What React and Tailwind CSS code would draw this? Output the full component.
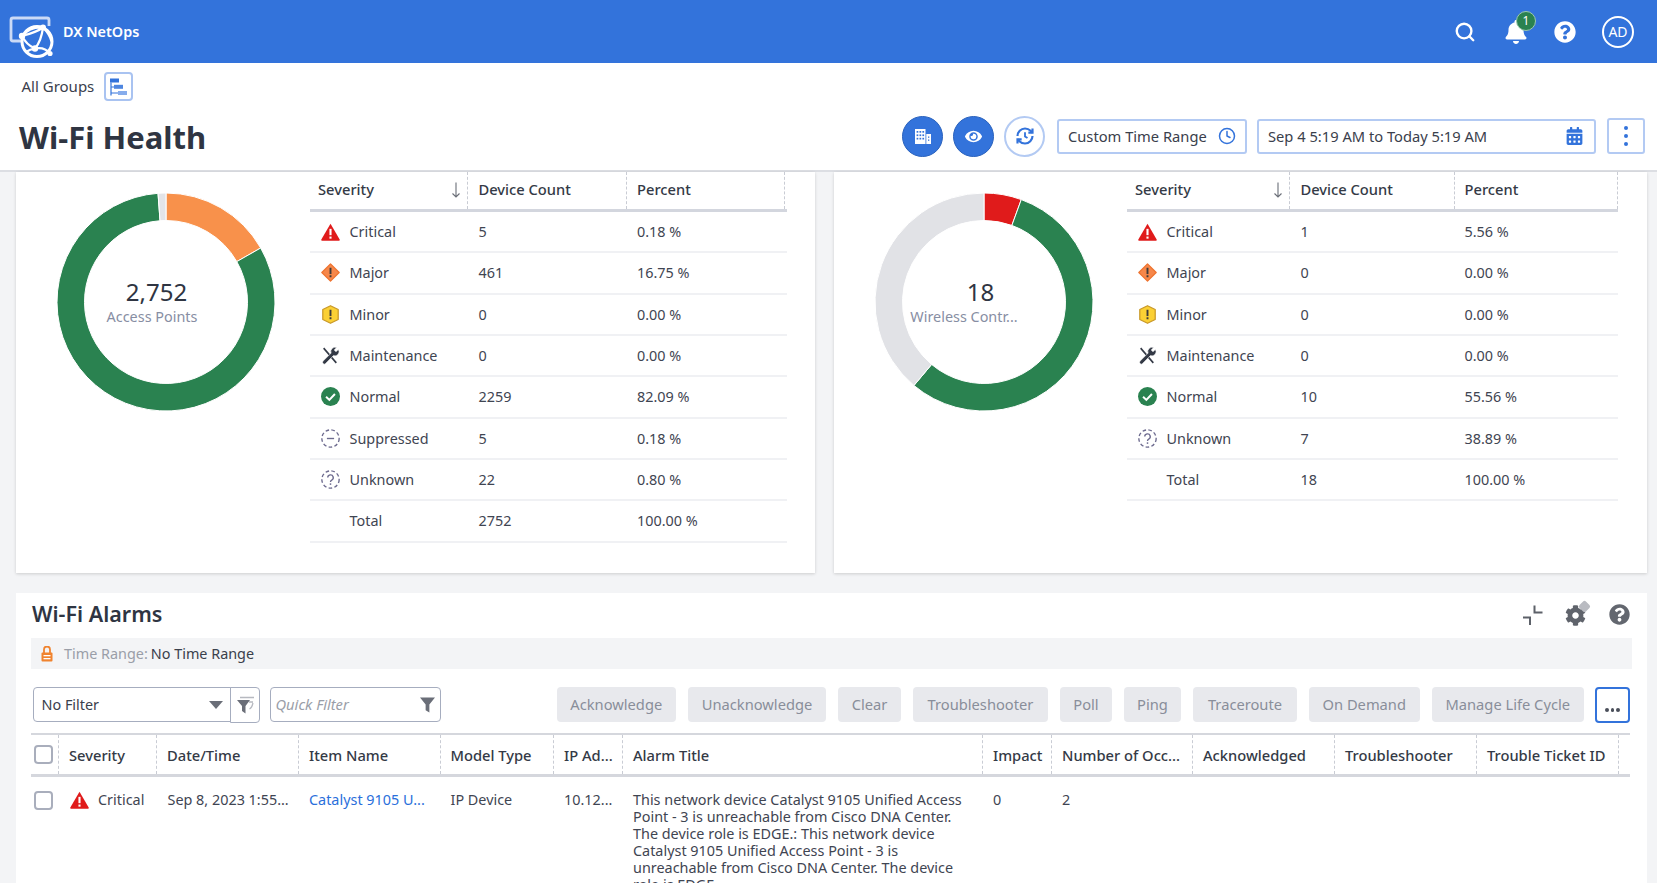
import { Clock, Search } from "lucide-react";
import { FaBell, FaCalendarAlt, FaCog, FaEye, FaQuestionCircle } from "react-icons/fa";

const Critical = ({ className = "" }) => (
  <svg viewBox="0 0 18 17" className={`w-[19px] h-[18px] shrink-0 ${className}`}>
    <path d="M9 .6 17.7 15.6q.4 1-.7 1.2H1q-1.1-.2-.7-1.2Z" fill="#e01b1b" />
    <rect x="8" y="5.5" width="2" height="6" fill="#fff" />
    <rect x="8" y="12.8" width="2" height="2" fill="#fff" />
  </svg>
);

const Major = () => (
  <svg viewBox="0 0 18 18" className="w-[19px] h-[19px] shrink-0">
    <path d="M9 .8 17.2 9 9 17.2.8 9Z" fill="#f6874a" stroke="#ee7430" strokeWidth="1.2" strokeLinejoin="round" />
    <rect x="8.1" y="4.5" width="1.8" height="6" fill="#3d3a3a" />
    <rect x="8.1" y="11.6" width="1.8" height="1.9" fill="#3d3a3a" />
  </svg>
);

const Minor = () => (
  <svg viewBox="0 0 18 18" className="w-[19px] h-[19px] shrink-0">
    <path d="M9 .7 16.3 4.3V13.7L9 17.3 1.7 13.7V4.3Z" fill="#fbd034" stroke="#c9992a" strokeWidth="1.2" strokeLinejoin="round" />
    <rect x="8.1" y="4.5" width="1.8" height="6" fill="#3d3a3a" />
    <rect x="8.1" y="11.6" width="1.8" height="1.9" fill="#3d3a3a" />
  </svg>
);

const Maintenance = () => (
  <svg viewBox="0 0 18 18" className="w-[19px] h-[19px] shrink-0">
    <path d="M2.500 2 14.500 16" fill="none" stroke="#333945" strokeWidth="1.500" />
    <path d="M16.500 3.200 14.200 5.500 12.500 3.800 14.800 1.500a4 4 0 0 0-5.200 5.200L2 14.300a1.600 1.600 0 0 0 2.300 2.300l7.500-7.500a4 4 0 0 0 4.700-5.900z" fill="#333945" stroke="#fff" strokeWidth="0.500" />
  </svg>
);

const Normal = () => (
  <svg viewBox="0 0 18 18" className="w-[19px] h-[19px] shrink-0">
    <circle cx="9" cy="9" r="9" fill="#2a8250" />
    <path d="M4.8 9.2 7.9 12.2 13.2 6.6" fill="none" stroke="#fff" strokeWidth="1.9" />
  </svg>
);

const Suppressed = () => (
  <svg viewBox="0 0 18 18" className="w-[19px] h-[19px] shrink-0" fill="none" stroke="#6d6b8f">
    <circle cx="9" cy="9" r="8.2" strokeWidth="1.3" strokeDasharray="3.4 2.2" />
    <path d="M5.6 9h6.8" strokeWidth="1.3" />
  </svg>
);

const Unknown = () => (
  <svg viewBox="0 0 18 18" className="w-[19px] h-[19px] shrink-0" fill="none" stroke="#6d6b8f">
    <circle cx="9" cy="9" r="8.2" strokeWidth="1.3" strokeDasharray="3.4 2.2" />
    <path d="M6.4 7.2a2.6 2.6 0 1 1 3.8 2.3c-.8.4-1.2.9-1.2 1.8" strokeWidth="1.3" />
    <path d="M9 12.6v1.5" strokeWidth="1.4" />
  </svg>
);

const Logo = () => (
  <svg viewBox="0 0 56 56" className="w-[56px] h-[56px]" fill="none">
    <path d="M21 36H13q-2 0-2-2V15q0-2 2-2h34q2 0 2 2v6" stroke="#cbdaf6" strokeWidth="2.800" />
    <circle cx="37" cy="36.500" r="15" stroke="#fff" strokeWidth="3" />
    <path d="M22 31C28 24 36 22 43 22.500M22 31c7-2 15-4 21-8.500M22 31c3 6 7 10 13 12.500M43 22.500c-1 8-3 15-8 21M35 43.500c5-1 11 0 15 5M43 22.500c4 4 7 8 8.500 14M26 47c3-2 6-3 9-3.500" stroke="#fff" strokeWidth="2.200" />
    <circle cx="22" cy="31" r="3.200" fill="#fff" />
    <circle cx="43" cy="22.500" r="3" fill="#fff" />
    <circle cx="35" cy="43.500" r="3.200" fill="#fff" />
    <circle cx="50" cy="48.500" r="2.600" fill="#fff" />
  </svg>
);

// annular sector for the donuts, angles in degrees from 12 o'clock
function arc(cx, cy, r1, r2, a0, a1) {
  const p = (r, a) => {
    const t = ((a - 90) * Math.PI) / 180;
    return `${cx + r * Math.cos(t)} ${cy + r * Math.sin(t)}`;
  };
  const big = a1 - a0 > 180 ? 1 : 0;
  return `M${p(r2, a0)}A${r2} ${r2} 0 ${big} 1 ${p(r2, a1)}L${p(r1, a1)}A${r1} ${r1} 0 ${big} 0 ${p(r1, a0)}Z`;
}

function Donut({ segments, value, label, valueClass, labelClass }) {
  return (
    <div className="relative w-[218px] h-[218px] shrink-0">
      <svg viewBox="0 0 218 218" className="w-[218px] h-[218px]">
        {segments.map((s) => (
          <path key={s.from} d={arc(109, 109, 81.5, 109, s.from, s.to)} fill={s.color} stroke="#fff" strokeWidth="1" />
        ))}
      </svg>
      <div className="absolute inset-0 flex flex-col items-center pt-[81.500px]">
        <div className={`text-[24px] leading-[34px] text-[#2f3542] ${valueClass}`}>{value}</div>
        <div className={`text-[14.400px] leading-[18px] -mt-[1px] text-[#878ea3] ${labelClass}`}>{label}</div>
      </div>
    </div>
  );
}

function SeverityTable({ rows, tableClass, col1, col2, col3 }) {
  return (
    <div className={tableClass}>
      <div className="flex h-[40px] border-b-[3px] border-[#d3d6de] font-medium text-[14.700px] text-[#343a46]">
        <div className={`${col1} flex items-center justify-between pl-[8px] pr-[6px] pb-[2px] border-r border-dashed border-[#c9ccd4]`}>
          Severity
          <svg viewBox="0 0 10 16" className="w-[10px] h-[16px]" fill="none" stroke="#6b6f78" strokeWidth="1.100">
            <path d="M5 0.500V15M1.500 11.500 5 15 8.500 11.500" />
          </svg>
        </div>
        <div className={`${col2} flex items-center pl-[10.500px] pb-[2px] border-r border-dashed border-[#c9ccd4]`}>Device Count</div>
        <div className={`${col3} flex items-center pl-[10px] pb-[2px] border-r border-dashed border-[#c9ccd4]`}>Percent</div>
      </div>
      {rows.map((r) => (
        <div key={r.name} className="flex items-center h-[41.330px] border-b-2 border-[#f0f1f4] text-[#3f4552]">
          <div className={`${col1} flex items-center pl-[11px] gap-[9.500px]`}>
            {r.icon ? r.icon : <span className="w-[19px]" />}
            {r.name}
          </div>
          <div className={`${col2} pl-[10.500px]`}>{r.count}</div>
          <div className={`${col3} pl-[10px]`}>{r.pct}</div>
        </div>
      ))}
    </div>
  );
}

const apRows = [
  { name: "Critical", icon: <Critical />, count: "5", pct: "0.18 %" },
  { name: "Major", icon: <Major />, count: "461", pct: "16.75 %" },
  { name: "Minor", icon: <Minor />, count: "0", pct: "0.00 %" },
  { name: "Maintenance", icon: <Maintenance />, count: "0", pct: "0.00 %" },
  { name: "Normal", icon: <Normal />, count: "2259", pct: "82.09 %" },
  { name: "Suppressed", icon: <Suppressed />, count: "5", pct: "0.18 %" },
  { name: "Unknown", icon: <Unknown />, count: "22", pct: "0.80 %" },
  { name: "Total", count: "2752", pct: "100.00 %" },
];

const wcRows = [
  { name: "Critical", icon: <Critical />, count: "1", pct: "5.56 %" },
  { name: "Major", icon: <Major />, count: "0", pct: "0.00 %" },
  { name: "Minor", icon: <Minor />, count: "0", pct: "0.00 %" },
  { name: "Maintenance", icon: <Maintenance />, count: "0", pct: "0.00 %" },
  { name: "Normal", icon: <Normal />, count: "10", pct: "55.56 %" },
  { name: "Unknown", icon: <Unknown />, count: "7", pct: "38.89 %" },
  { name: "Total", count: "18", pct: "100.00 %" },
];

const actions = [
  { name: "Acknowledge", w: "w-[119.500px]" },
  { name: "Unacknowledge", w: "w-[138px]" },
  { name: "Clear", w: "w-[63px]" },
  { name: "Troubleshooter", w: "w-[135px]" },
  { name: "Poll", w: "w-[52px]" },
  { name: "Ping", w: "w-[57px]" },
  { name: "Traceroute", w: "w-[104px]" },
  { name: "On Demand", w: "w-[110.500px]" },
  { name: "Manage Life Cycle", w: "w-[152.500px]" },
];

const columns = [
  { name: "Severity", w: "w-[98px]" },
  { name: "Date/Time", w: "w-[142px]" },
  { name: "Item Name", w: "w-[141.500px]" },
  { name: "Model Type", w: "w-[113.500px]" },
  { name: "IP Ad...", w: "w-[69px]" },
  { name: "Alarm Title", w: "w-[360px]" },
  { name: "Impact", w: "w-[69px]" },
  { name: "Number of Occ...", w: "w-[141px]" },
  { name: "Acknowledged", w: "w-[142px]" },
  { name: "Troubleshooter", w: "w-[142px]" },
  { name: "Trouble Ticket ID", w: "w-[141.500px]" },
];

const Funnel = ({ className }) => (
  <svg viewBox="0 0 16 18" className={className}>
    <path d="M0 1.500H16L10 9V17.500L6 15V9Z" fill="#6a6e78" />
  </svg>
);

export default function App() {
  return (
    <div className="h-screen overflow-hidden flex flex-col bg-[#f3f4f6] text-[14.400px] font-['Noto_Sans',sans-serif]">
      {/* top bar */}
      <header className="h-[63px] shrink-0 bg-[#3373db] flex items-center text-white">
        <div className="mt-[2px]">
          <Logo />
        </div>
        <span className="ml-[7px] font-semibold text-[14.400px]">DX NetOps</span>
        <div className="ml-auto flex items-center">
          <Search className="w-[22px] h-[22px] mr-[29px]" strokeWidth={2.600} />
          <div className="relative mr-[27px]">
            <FaBell className="w-[22px] h-[24px]" />
            <span className="absolute -top-[9px] -right-[9px] w-[20px] h-[20px] rounded-full bg-[#2a8250] border border-[#9cc9ae] text-[12px] leading-[17px] text-center">1</span>
          </div>
          <FaQuestionCircle className="w-[22px] h-[22px] mr-[26px]" />
          <div className="w-[32px] h-[32px] mr-[23px] rounded-full border-2 border-white flex items-center justify-center text-[14px]">AD</div>
        </div>
      </header>

      {/* page heading */}
      <div className="h-[109px] shrink-0 bg-white border-b-2 border-[#dcdee3]">
        <div className="flex items-center h-[29px] mt-[9px] pl-[21.500px]">
          <span className="text-[15px] text-[#3a404c]">All Groups</span>
          <button className="ml-[10px] w-[29px] h-[29px] rounded-[4px] border-2 border-[#a9c3f1] flex items-center justify-center">
            <svg viewBox="0 0 17 18" className="w-[17px] h-[18px]">
              <rect x="0" y="0.500" width="9" height="4" fill="#3373db" />
              <rect x="4" y="6.800" width="9" height="4" fill="#4e86e0" />
              <rect x="8" y="13" width="9" height="4" fill="#86acec" />
              <path d="M1 4.500V17.500M1 9H4M1 15H8" stroke="#3373db" strokeWidth="1.200" fill="none" />
            </svg>
          </button>
        </div>
        <div className="flex items-center mt-[14px] pl-[19px] pr-[12px]">
          <h1 className="text-[31px] leading-[44px] font-bold text-[#2f3542]">Wi-Fi Health</h1>
          <div className="ml-auto mb-[2px] flex items-center text-[14.700px]">
            <button className="w-[41px] h-[41px] rounded-full bg-[#3373db] border border-[#2a62bd] flex items-center justify-center">
              <svg viewBox="0 0 16 15" className="w-[16px] h-[15px]" fill="#fff">
                <rect x="0" y="0" width="10.500" height="15" />
                <rect x="11.300" y="5" width="4.700" height="10" />
                {[2, 5.400, 8.800].map((y) =>
                  [1.600, 4.500, 7.400].map((x) => <rect key={`${x}${y}`} x={x} y={y} width="1.700" height="1.700" fill="#3373db" />),
                )}
                <rect x="13" y="7.500" width="1.300" height="1.300" fill="#3373db" />
                <rect x="13" y="10.500" width="1.300" height="1.300" fill="#3373db" />
              </svg>
            </button>
            <button className="ml-[10px] w-[41px] h-[41px] rounded-full bg-[#3373db] border border-[#2a62bd] flex items-center justify-center">
              <FaEye className="w-[17px] h-[17px] text-white" />
            </button>
            <button className="ml-[10px] w-[41px] h-[41px] rounded-full border-2 border-[#b3caf3] flex items-center justify-center">
              <svg viewBox="0 0 24 24" className="w-[20px] h-[20px]" fill="none" stroke="#3373db" strokeWidth="2.600">
                <path d="M3 12a9 9 0 0 1 9-9 9.750 9.750 0 0 1 6.740 2.740L21 8" />
                <path d="M21 3v5h-5" />
                <path d="M21 12a9 9 0 0 1-9 9 9.750 9.750 0 0 1-6.740-2.740L3 16" />
                <path d="M8 16H3v5" />
                <path d="M12 7.500v5l3 2" strokeWidth="2.200" />
              </svg>
            </button>
            <div className="ml-[12px] w-[190px] h-[35px] rounded-[3px] border-2 border-[#b3caf3] flex items-center justify-between pl-[9px] pr-[9px] text-[#3a404c]">
              Custom Time Range
              <Clock className="w-[18px] h-[18px] text-[#3373db]" strokeWidth={2} />
            </div>
            <div className="ml-[10px] w-[339px] h-[35px] rounded-[3px] border-2 border-[#b3caf3] flex items-center justify-between pl-[9px] pr-[11px] text-[#3a404c]">
              Sep 4 5:19 AM to Today 5:19 AM
              <FaCalendarAlt className="w-[17px] h-[18px] text-[#3373db]" />
            </div>
            <button className="ml-[11px] w-[38px] h-[36px] rounded-[3px] border-2 border-[#b3caf3] flex flex-col items-center justify-center gap-[3.500px]">
              <span className="w-[4.500px] h-[4.500px] rounded-full bg-[#3373db]" />
              <span className="w-[4.500px] h-[4.500px] rounded-full bg-[#3373db]" />
              <span className="w-[4.500px] h-[4.500px] rounded-full bg-[#3373db]" />
            </button>
          </div>
        </div>
      </div>

      <div className="flex shrink-0 pl-[16px] gap-[19px]">
        <section className="w-[799px] h-[401px] bg-white shadow-[0_1px_3px_rgba(0,0,0,0.16)] flex">
          <div className="ml-[41px] mt-[21px]">
            <Donut
              value="2,752"
              label="Access Points"
              valueClass="mr-[19px]"
              labelClass="mr-[28px]"
              segments={[
                { from: 0, to: 60.300, color: "#f8914b" },
                { from: 60.300, to: 355.800, color: "#2a8250" },
                { from: 355.800, to: 360, color: "#e3e4e8" },
              ]}
            />
          </div>
          <SeverityTable rows={apRows} tableClass="ml-[35px] w-[477px]" col1="w-[158px]" col2="w-[159px]" col3="w-[158px]" />
        </section>
        <section className="w-[813px] h-[401px] bg-white shadow-[0_1px_3px_rgba(0,0,0,0.16)] flex">
          <div className="ml-[41px] mt-[21px]">
            <Donut
              value="18"
              label="Wireless Contr..."
              valueClass="mr-[7px]"
              labelClass="mr-[40px]"
              segments={[
                { from: 0, to: 20, color: "#e01b1b" },
                { from: 20, to: 220, color: "#2a8250" },
                { from: 220, to: 360, color: "#e1e2e6" },
              ]}
            />
          </div>
          <SeverityTable rows={wcRows} tableClass="ml-[34px] w-[491px]" col1="w-[163px]" col2="w-[164.500px]" col3="w-[163.500px]" />
        </section>
      </div>

      {/* alarms */}
      <section className="mt-[20px] ml-[16px] w-[1631px] flex-1 bg-white pl-[15px] overflow-hidden">
        <div className="flex items-center h-[45px] w-[1601px] pl-[1px] pb-[2px]">
          <h2 className="text-[21.500px] font-semibold text-[#2f3542]">Wi-Fi Alarms</h2>
          <div className="ml-auto flex items-center">
            <svg viewBox="0 0 22 22" className="w-[22px] h-[22px] mr-[21px]" fill="none" stroke="#5d6169" strokeWidth="2">
              <path d="M12.500 1.500V8.500H20.500M1 13.500H8V21" />
            </svg>
            <div className="relative mr-[23px]">
              <FaCog className="w-[21px] h-[21px] mt-[2px] text-[#5f636b]" />
              <span className="absolute -top-[1px] -right-[3px] w-[9px] h-[9px] rotate-45 bg-[#b9bbc1] rounded-[2px]" />
            </div>
            <FaQuestionCircle className="w-[21px] h-[21px] mr-[2px] text-[#63676f]" />
          </div>
        </div>
        <div className="w-[1601px] h-[31px] bg-[#f3f4f6] flex items-center pl-[10px]">
          <svg viewBox="0 0 12 16" className="w-[12px] h-[16px] mr-[11px]">
            <path d="M3 7V3.500a3 3 0 0 1 6 0V7" fill="none" stroke="#f0832f" strokeWidth="1.800" />
            <rect x="0.500" y="6.500" width="11" height="9" rx="1" fill="#f0832f" />
            <rect x="2.500" y="9" width="7" height="1.300" fill="#fff" />
            <rect x="2.500" y="12" width="7" height="1.300" fill="#fff" />
          </svg>
          <span className="text-[#9a9ea8]">Time Range:</span>
          <span className="ml-[3px] text-[#3a404c]">No Time Range</span>
        </div>
        <div className="flex items-center justify-between w-[1599px] h-[35px] mt-[18px] pl-[1.500px] text-[14.700px]">
          <div className="flex items-center">
            <div className="w-[198px] h-[35px] rounded-l-[4px] border-[1.500px] border-[#a6adbf] flex items-center justify-between pl-[8px] pr-[7px] text-[14.400px] text-[#3a404c]">
              No Filter
              <span className="w-0 h-0 border-x-[7px] border-x-transparent border-t-[8px] border-t-[#6a6e78]" />
            </div>
            <div className="w-[30px] h-[36px] -ml-[1px] rounded-r-[4px] border-[1.500px] border-[#a6adbf] flex items-center justify-center">
              <svg viewBox="0 0 20 20" className="w-[20px] h-[20px]">
                <path d="M2 5H15L10.500 11V18.500L7 16V11Z" fill="#6a6e78" />
                <path d="M5 2.500H19M14 7H18M14.500 14c2-1 3-4 3.500-6" fill="none" stroke="#b6b9c0" strokeWidth="1.300" />
              </svg>
            </div>
            <div className="ml-[10px] w-[171px] h-[35px] rounded-[4px] border-[1.500px] border-[#a6adbf] flex items-center justify-between pl-[5px] pr-[5px] italic text-[#9a9ea8]">
              Quick Filter
              <Funnel className="w-[15px] h-[17px]" />
            </div>
          </div>
          <div className="flex items-center gap-[12px]">
            {actions.map((a) => (
              <button key={a.name} className={`${a.w} h-[34.500px] rounded-[4px] bg-[#e8e9ed] text-[#898e9a]`}>
                {a.name}
              </button>
            ))}
            <button className="-ml-[1.500px] w-[35.500px] h-[36px] rounded-[4px] border-2 border-[#3373db] flex items-end justify-center pb-[9px] gap-[2px]">
              <span className="w-[3.500px] h-[3.500px] rounded-full bg-[#4a4f5a]" />
              <span className="w-[3.500px] h-[3.500px] rounded-full bg-[#4a4f5a]" />
              <span className="w-[3.500px] h-[3.500px] rounded-full bg-[#4a4f5a]" />
            </button>
          </div>
        </div>
        <div className="mt-[11px] w-[1599px]">
          <div className="flex h-[44px] border-t-2 border-b-[3px] border-[#d5d7dd] font-medium text-[14.700px] text-[#343a46]">
            <div className="w-[28px] shrink-0 flex items-center pl-[2.500px] border-r border-dashed border-[#c9ccd4]">
              <span className="w-[19px] h-[19px] rounded-[4px] border-2 border-[#a9aebc] bg-white" />
            </div>
            {columns.map((c) => (
              <div key={c.name} className={`${c.w} shrink-0 flex items-center pl-[10px] pt-[2px] whitespace-nowrap border-r border-dashed border-[#c9ccd4]`}>
                {c.name}
              </div>
            ))}
          </div>
          <div className="flex pt-[14px] leading-[17.100px] text-[#3f4552]">
            <div className="w-[28px] shrink-0 pl-[2.500px]">
              <span className="block w-[19px] h-[19px] rounded-[4px] border-2 border-[#a9aebc] bg-white" />
            </div>
            <div className="w-[98px] shrink-0 flex items-start pl-[10.500px] gap-[9.500px]">
              <Critical />
              Critical
            </div>
            <div className="w-[142px] shrink-0 pl-[10.500px] whitespace-nowrap">Sep 8, 2023 1:55...</div>
            <div className="w-[141.500px] shrink-0 pl-[10px] whitespace-nowrap text-[#2a6fdb]">Catalyst 9105 U...</div>
            <div className="w-[113.500px] shrink-0 pl-[10px]">IP Device</div>
            <div className="w-[69px] shrink-0 pl-[10px]">10.12...</div>
            <div className="w-[360px] shrink-0 pl-[10px] pr-[10px]">
              This network device Catalyst 9105 Unified Access Point - 3 is unreachable from Cisco DNA Center. The device role is EDGE.: This network device Catalyst 9105 Unified Access Point - 3 is unreachable from Cisco DNA Center. The device role is EDGE.
            </div>
            <div className="w-[69px] shrink-0 pl-[10px]">0</div>
            <div className="w-[141px] shrink-0 pl-[10px]">2</div>
          </div>
        </div>
      </section>
    </div>
  );
}
